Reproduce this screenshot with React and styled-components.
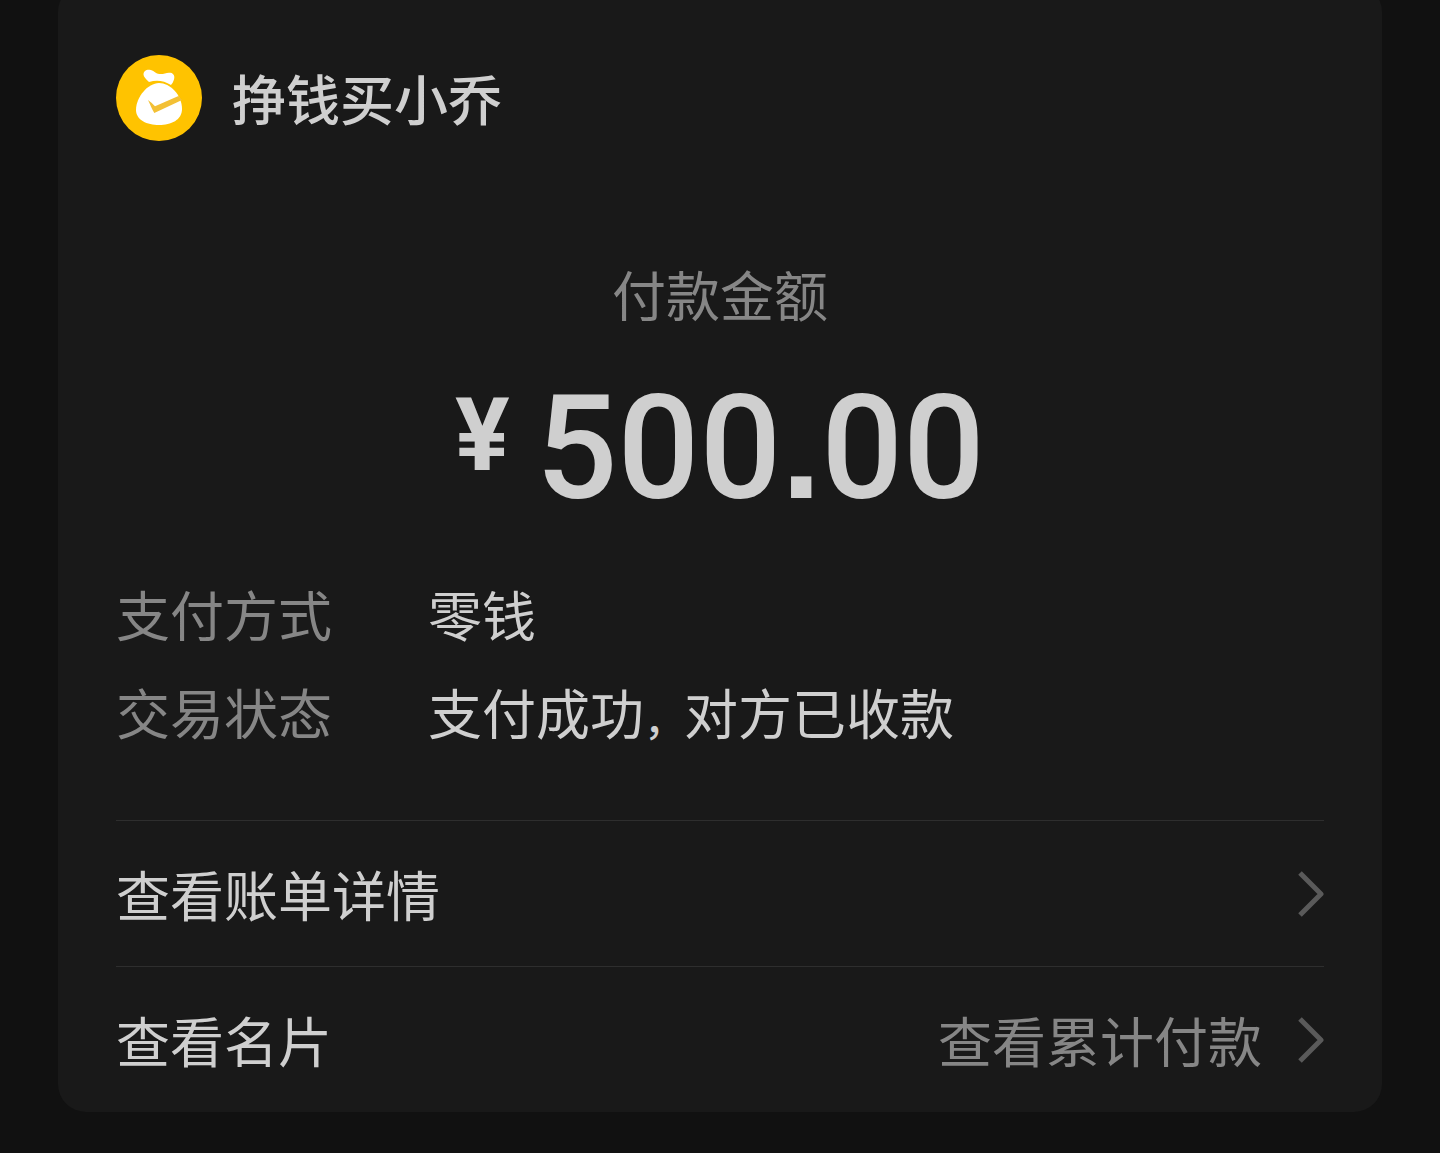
import React from 'react';
import styled, { createGlobalStyle } from 'styled-components';

const GlobalStyle = createGlobalStyle`
  *, *::before, *::after {
    box-sizing: border-box;
  }

  body {
    margin: 0;
    background: #111111;
    color: #cfcfcf;
    font-family: 'Noto Sans CJK SC', 'Noto Sans', sans-serif;
    font-size: 54px;
    line-height: 78px;
  }
`;

const Page = styled.main`
  padding: 0 58px 41px;
`;

const Card = styled.article`
  margin-top: -16px;
  padding: 71px 58px 0;
  background: #191919;
  border-radius: 28px;
`;

const Header = styled.header`
  display: flex;
  align-items: center;
  gap: 30px;
`;

const Avatar = styled.svg`
  width: 86px;
  height: 86px;
  flex: none;
`;

const Title = styled.h1`
  margin: 0;
  font-size: 54px;
  font-weight: 500;
  line-height: 78px;
`;

const Payment = styled.section`
  display: flex;
  flex-direction: column;
  align-items: center;
  padding: 114px 0 42px;
`;

const Caption = styled.p`
  margin: 0;
  color: #868686;
`;

const Amount = styled.p`
  display: flex;
  align-items: flex-start;
  gap: 26px;
  margin: 32px 0 0;
  font-family: Roboto, sans-serif;
  font-size: 144px;
  font-weight: 500;
  line-height: 168px;
`;

const Currency = styled.span`
  font-size: 102px;
  font-weight: 700;
  line-height: 140px;
`;

// square decimal point
const Point = styled.span`
  font-family: 'Liberation Sans', sans-serif;
  font-weight: 700;
`;

const Details = styled.dl`
  display: grid;
  grid-template-columns: 216px 1fr;
  gap: 20px 96px;
  margin: 0;
  padding-bottom: 69px;
`;

const Term = styled.dt`
  color: #868686;
`;

const Value = styled.dd`
  margin: 0;
`;

// narrower comma than the full-width cell
const Comma = styled.span`
  font-size: 40px;
  font-weight: 500;
  line-height: 1;
`;

const LinkRow = styled.a`
  display: flex;
  align-items: center;
  height: 146px;
  border-top: 1px solid #2e2e2e;
  color: inherit;
  text-decoration: none;
`;

const Hint = styled.span`
  margin-left: auto;
  color: #868686;
`;

const Arrow = styled.svg`
  width: 26px;
  height: 46px;
  flex: none;
  margin-left: ${(props) => (props.$afterHint ? '36px' : 'auto')};
  fill: none;
  stroke: #5a5a5a;
  stroke-width: 5;
`;

const details = [
  { term: '支付方式', value: '零钱' },
  {
    term: '交易状态',
    value: (
      <>
        支付成功<Comma>，</Comma>对方已收款
      </>
    ),
  },
];

const links = [
  { label: '查看账单详情' },
  { label: '查看名片', hint: '查看累计付款' },
];

const MoneyBag = () => (
  <Avatar viewBox="0 0 86 86" aria-hidden="true">
    <circle cx="43" cy="43" r="43" fill="#ffc300" />
    <path
      fill="#fff"
      d="M33 27 C30 24 27.500 22 27.500 19.500 C27.500 16.500 30 14.500 33.500 14.800 C37.500 15.200 39 18.500 43.500 19 C48 19.500 50.500 17 54.500 17.800 C58 18.500 59 21.500 58 24.500 C57 27 56.500 28.500 55 30 C48 25.500 40.500 24.500 33 27 Z"
    />
    <path
      fill="#fff"
      d="M43 28 C32 28 20 42 20 55 C20 65 31 70 43 70 C55 70 66 65 66 54 C66 40 54 28 43 28 Z"
    />
    <path
      fill="#f3c035"
      d="M32 45 C34.500 47 36.500 48.500 39 51.300 L62.500 41 L66 45 L38.300 58 C36 54 34 49.500 32 45 Z"
    />
  </Avatar>
);

const App = () => {
  return (
    <>
      <GlobalStyle />
      <Page>
        <Card>
          <Header>
            <MoneyBag />
            <Title>挣钱买小乔</Title>
          </Header>

          <Payment>
            <Caption>付款金额</Caption>
            <Amount>
              <Currency>¥</Currency>
              <span>
                500<Point>.</Point>00
              </span>
            </Amount>
          </Payment>

          <Details>
            {details.map(({ term, value }) => (
              <React.Fragment key={term}>
                <Term>{term}</Term>
                <Value>{value}</Value>
              </React.Fragment>
            ))}
          </Details>

          <nav>
            {links.map(({ label, hint }) => (
              <LinkRow href="#" key={label}>
                <span>{label}</span>
                {hint && <Hint>{hint}</Hint>}
                <Arrow $afterHint={Boolean(hint)} viewBox="0 0 26 46" aria-hidden="true">
                  <path strokeLinejoin="round" d="M2 2 L23 23 L2 44" />
                </Arrow>
              </LinkRow>
            ))}
          </nav>
        </Card>
      </Page>
    </>
  );
};

export default App;
